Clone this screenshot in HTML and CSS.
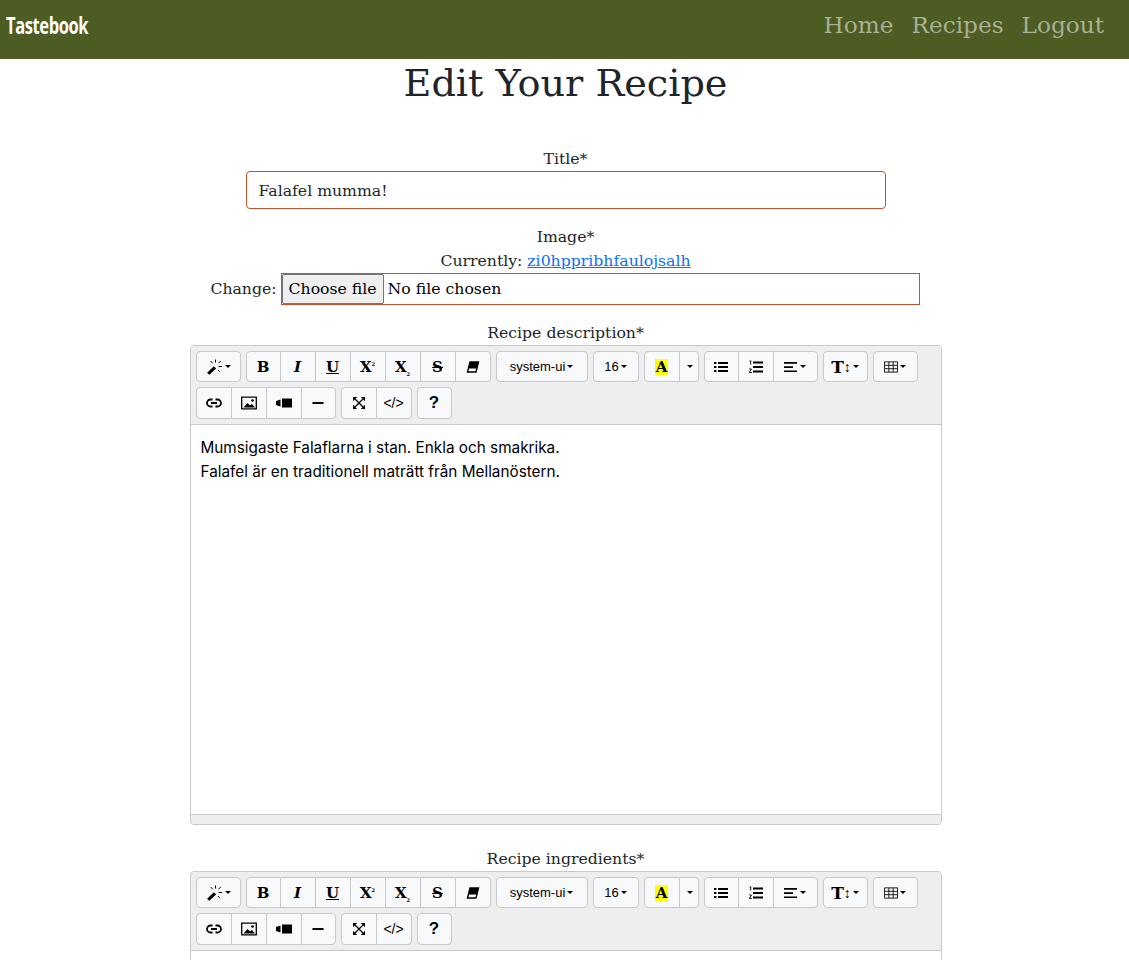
FILE: index.html
```html
<!DOCTYPE html>
<html lang="en">
<head>
  <meta charset="UTF-8" />
  <meta name="viewport" content="width=device-width, initial-scale=1.0"/>
  <title>Edit Your Recipe</title>
  <link rel="stylesheet" href="styles.css">
</head>
<body>
  <svg class="icon-defs" aria-hidden="true">
    <symbol id="i-magic" viewBox="0 0 16 16">
      <path d="M.6 13.800 7.400 7.200l2.200 2.200-6.800 6.400z" fill="#000"/>
      <path d="M9 .5v3M14.200 2l-2.200 2.200M4.200 2l2 2.200M12 7.500h3.500M11.400 11l1.800 1.800" stroke="#000" stroke-width="1" fill="none"/>
    </symbol>
    <symbol id="i-eraser" viewBox="0 0 14 14">
      <path d="M4 2h8.500l-2.500 10H1.500z" fill="none" stroke="#000" stroke-width="1.400"/>
      <path d="M4 2h8.500l-1.500 6.500H2.500z" fill="#000"/>
    </symbol>
    <symbol id="i-ul" viewBox="0 0 14 14">
      <path d="M0 2h2.400v2H0zM0 6h2.400v2H0zM0 10h2.400v2H0zM4 2h10v2H4zM4 6h10v2H4zM4 10h10v2H4z" fill="#000"/>
    </symbol>
    <symbol id="i-ol" viewBox="0 0 14 14">
      <path d="M4 1.500h10v2H4zM4 6h10v2H4zM4 10.500h10v2H4z" fill="#000"/>
      <path d="M.6 1.200 1.700.6v4M.2 9h2.300L.3 12.500h2.500" fill="none" stroke="#000" stroke-width=".9"/>
    </symbol>
    <symbol id="i-align" viewBox="0 0 14 14">
      <path d="M0 2h13v1.700H0zM0 6.200h9v1.700H0zM0 10.400h13v1.700H0z" fill="#000"/>
    </symbol>
    <symbol id="i-table" viewBox="0 0 15 14">
      <path d="M.5 1.500h14v11H.5zM.5 5.200h14M.5 8.800h14M5.200 1.500v11M9.800 1.500v11" fill="none" stroke="#111" stroke-width="1"/>
    </symbol>
    <symbol id="i-link" viewBox="0 0 16 14">
      <path d="M6.500 3.500H4.500a3.500 3.500 0 0 0 0 7h2M9.500 3.500h2a3.500 3.500 0 0 1 0 7h-2M5 7h6" fill="none" stroke="#000" stroke-width="1.800"/>
    </symbol>
    <symbol id="i-picture" viewBox="0 0 16 14">
      <path d="M.7 1.200h14.600v11.600H.7z" fill="none" stroke="#000" stroke-width="1.300"/>
      <path d="M2.500 11.500 6.500 7l2.500 2.500 2-1.500 3 3.500z" fill="#000"/>
      <circle cx="11.500" cy="4.500" r="1.300" fill="#000"/>
    </symbol>
    <symbol id="i-video" viewBox="0 0 16 14">
      <path d="M6 2.500h10v9H6zM0 5l4.500-1.500v7L0 9z" fill="#000"/>
    </symbol>
    <symbol id="i-hr" viewBox="0 0 14 14">
      <path d="M1.500 6h11v2h-11z" fill="#000"/>
    </symbol>
    <symbol id="i-full" viewBox="0 0 14 14">
      <path d="M3 3l8 8M11 3l-8 8" stroke="#000" stroke-width="1.200" fill="none"/>
      <path d="M1 1h4.200L1 5.200zM13 1H8.800L13 5.200zM1 13h4.200L1 8.800zM13 13H8.800L13 8.800z" fill="#000"/>
    </symbol>
  </svg>

  <nav class="navbar">
    <a class="brand" href="#">Tastebook</a>
    <div class="nav-links">
      <a href="#">Home</a>
      <a href="#">Recipes</a>
      <a href="#">Logout</a>
    </div>
  </nav>

  <main class="page">
    <h1>Edit Your Recipe</h1>
    <form class="recipe-form">
      <div class="field">
        <label for="title">Title*</label>
        <input class="title-input" type="text" id="title" value="Falafel mumma!">
      </div>

      <div class="field">
        <label for="image">Image*</label>
        <div>Currently: <a href="#">zi0hppribhfaulojsalh</a></div>
        <div class="file-row">Change:
          <label class="file-input">
            <input type="file" id="image">
            <span class="file-btn">Choose file</span>
            <span>No file chosen</span>
          </label>
        </div>
      </div>

      <div class="field">
        <label>Recipe description*</label>
        <div class="editor">
          <div class="toolbar">
            <div class="btn-group"><button type="button" class="btn wide"><svg class="ico magic"><use href="#i-magic"/></svg><i class="caret"></i></button></div>
            <div class="btn-group">
              <button type="button" class="btn"><b class="glyph">B</b></button>
              <button type="button" class="btn"><b class="glyph slant">I</b></button>
              <button type="button" class="btn"><b class="glyph under">U</b></button>
              <button type="button" class="btn"><b class="glyph">X<sup>2</sup></b></button>
              <button type="button" class="btn"><b class="glyph">X<sub>2</sub></b></button>
              <button type="button" class="btn"><b class="glyph strike">S</b></button>
              <button type="button" class="btn"><svg class="ico small"><use href="#i-eraser"/></svg></button>
            </div>
            <div class="btn-group"><button type="button" class="btn font-name">system-ui<i class="caret"></i></button></div>
            <div class="btn-group"><button type="button" class="btn font-size">16<i class="caret"></i></button></div>
            <div class="btn-group">
              <button type="button" class="btn lead"><b class="glyph marker">A</b></button>
              <button type="button" class="btn narrow"><i class="caret"></i></button>
            </div>
            <div class="btn-group">
              <button type="button" class="btn"><svg class="ico small"><use href="#i-ul"/></svg></button>
              <button type="button" class="btn"><svg class="ico small"><use href="#i-ol"/></svg></button>
              <button type="button" class="btn wide"><svg class="ico small"><use href="#i-align"/></svg><i class="caret"></i></button>
            </div>
            <div class="btn-group"><button type="button" class="btn wide"><b class="glyph big">T</b><span class="updown">↕</span><i class="caret"></i></button></div>
            <div class="btn-group"><button type="button" class="btn wide"><svg class="ico small"><use href="#i-table"/></svg><i class="caret"></i></button></div>
            <div class="btn-group">
              <button type="button" class="btn tall lead"><svg class="ico"><use href="#i-link"/></svg></button>
              <button type="button" class="btn tall"><svg class="ico"><use href="#i-picture"/></svg></button>
              <button type="button" class="btn tall"><svg class="ico"><use href="#i-video"/></svg></button>
              <button type="button" class="btn tall last"><svg class="ico small"><use href="#i-hr"/></svg></button>
            </div>
            <div class="btn-group">
              <button type="button" class="btn tall lead"><svg class="ico small"><use href="#i-full"/></svg></button>
              <button type="button" class="btn tall code">&lt;/&gt;</button>
            </div>
            <div class="btn-group"><button type="button" class="btn tall help">?</button></div>
          </div>
          <div class="editable">
            <p>Mumsigaste Falaflarna i stan. Enkla och smakrika.</p>
            <p>Falafel är en traditionell maträtt från Mellanöstern.</p>
          </div>
          <div class="statusbar"></div>
        </div>
      </div>

      <div class="field">
        <label>Recipe ingredients*</label>
        <div class="editor">
          <div class="toolbar">
            <div class="btn-group"><button type="button" class="btn wide"><svg class="ico magic"><use href="#i-magic"/></svg><i class="caret"></i></button></div>
            <div class="btn-group">
              <button type="button" class="btn"><b class="glyph">B</b></button>
              <button type="button" class="btn"><b class="glyph slant">I</b></button>
              <button type="button" class="btn"><b class="glyph under">U</b></button>
              <button type="button" class="btn"><b class="glyph">X<sup>2</sup></b></button>
              <button type="button" class="btn"><b class="glyph">X<sub>2</sub></b></button>
              <button type="button" class="btn"><b class="glyph strike">S</b></button>
              <button type="button" class="btn"><svg class="ico small"><use href="#i-eraser"/></svg></button>
            </div>
            <div class="btn-group"><button type="button" class="btn font-name">system-ui<i class="caret"></i></button></div>
            <div class="btn-group"><button type="button" class="btn font-size">16<i class="caret"></i></button></div>
            <div class="btn-group">
              <button type="button" class="btn lead"><b class="glyph marker">A</b></button>
              <button type="button" class="btn narrow"><i class="caret"></i></button>
            </div>
            <div class="btn-group">
              <button type="button" class="btn"><svg class="ico small"><use href="#i-ul"/></svg></button>
              <button type="button" class="btn"><svg class="ico small"><use href="#i-ol"/></svg></button>
              <button type="button" class="btn wide"><svg class="ico small"><use href="#i-align"/></svg><i class="caret"></i></button>
            </div>
            <div class="btn-group"><button type="button" class="btn wide"><b class="glyph big">T</b><span class="updown">↕</span><i class="caret"></i></button></div>
            <div class="btn-group"><button type="button" class="btn wide"><svg class="ico small"><use href="#i-table"/></svg><i class="caret"></i></button></div>
            <div class="btn-group">
              <button type="button" class="btn tall lead"><svg class="ico"><use href="#i-link"/></svg></button>
              <button type="button" class="btn tall"><svg class="ico"><use href="#i-picture"/></svg></button>
              <button type="button" class="btn tall"><svg class="ico"><use href="#i-video"/></svg></button>
              <button type="button" class="btn tall last"><svg class="ico small"><use href="#i-hr"/></svg></button>
            </div>
            <div class="btn-group">
              <button type="button" class="btn tall lead"><svg class="ico small"><use href="#i-full"/></svg></button>
              <button type="button" class="btn tall code">&lt;/&gt;</button>
            </div>
            <div class="btn-group"><button type="button" class="btn tall help">?</button></div>
          </div>
          <div class="editable"></div>
          <div class="statusbar"></div>
        </div>
      </div>
    </form>
  </main>
</body>
</html>
```

FILE: styles.css
```css
html, body {
  height: 100%;
  overflow: hidden;
}
body {
  margin: 0;
  font-family: "DejaVu Serif", serif;
  font-size: 15.7px;
  line-height: 24px;
  color: #212529;
  background: #fff;
}
a {
  color: #0d6efd;
}
.icon-defs {
  display: none;
}

/* navbar */
.navbar {
  height: 59px;
  box-sizing: border-box;
  padding: 0 25px 10px 6px;
  display: flex;
  justify-content: space-between;
  align-items: center;
  background: #4d5c22;
}
.brand {
  color: #fff;
  font-family: "Open Sans", sans-serif;
  font-weight: 700;
  font-size: 23px;
  line-height: 30px;
  letter-spacing: -0.6px;
  text-decoration: none;
  transform: scaleX(0.72);
  transform-origin: left center;
}
.nav-links {
  display: flex;
  gap: 18px;
}
.nav-links a {
  color: #a9b094;
  font-size: 23.2px;
  line-height: 48px;
  text-decoration: none;
}

/* form */
.page {
  padding-left: 2px;
  text-align: center;
}
h1 {
  margin: 0 0 40px;
  font-size: 38.2px;
  font-weight: 400;
  line-height: 48px;
}
.field {
  margin-bottom: 16px;
}
.field > label {
  display: block;
}
.title-input {
  display: block;
  box-sizing: border-box;
  width: 640px;
  height: 38px;
  margin: 0 auto;
  padding: 6px 12px;
  border: 1px solid #c8502d;
  border-radius: 4px;
  font: inherit;
  color: #212529;
}
.file-row {
  height: 32px;
  padding-right: 1px;
  display: flex;
  justify-content: center;
  align-items: center;
  gap: 4px;
}
.file-input {
  box-sizing: border-box;
  width: 639px;
  height: 32px;
  display: flex;
  align-items: center;
  gap: 4px;
  border: 1px solid #c8502d;
  color: #000;
  text-align: left;
}
.file-input input {
  display: none;
}
.file-btn {
  box-sizing: border-box;
  width: 102px;
  height: 30px;
  line-height: 28px;
  text-align: center;
  background: #efefef;
  border: 1px solid #767676;
  border-radius: 2px;
}

/* editor */
.editor {
  box-sizing: border-box;
  width: 752px;
  margin: 0 auto 22px;
  border: 1px solid #c9c9c9;
  border-radius: 4px;
  text-align: left;
}
.toolbar {
  display: flex;
  flex-wrap: wrap;
  padding: 0 0 5px 5px;
  background: #eee;
  border-bottom: 1px solid #c9c9c9;
  border-radius: 4px 4px 0 0;
}
.btn-group {
  display: flex;
  margin: 5px 5px 0 0;
}
.btn {
  box-sizing: border-box;
  width: 36px;
  height: 31px;
  margin-left: -1px;
  padding: 0;
  display: flex;
  justify-content: center;
  align-items: center;
  background: #f8f9fa;
  border: 1px solid #c9c9c9;
  color: #000;
  font-family: "Liberation Sans", sans-serif;
  font-size: 13px;
}
.btn:first-child {
  width: 35px;
  margin-left: 0;
  border-radius: 4px 0 0 4px;
}
.btn:last-child {
  border-radius: 0 4px 4px 0;
}
.btn:only-child {
  border-radius: 4px;
}
.btn.tall {
  height: 32px;
}
.btn.lead {
  width: 36px;
}
.btn.last {
  width: 35px;
}
.btn.wide {
  width: 45px;
}
.btn.narrow {
  width: 20px;
}
.btn.font-name {
  width: 92px;
}
.btn.font-size {
  width: 46px;
}
.btn.code {
  font-size: 14px;
}
.btn.help {
  width: 35px;
  font-size: 17px;
  font-weight: 700;
}
.ico {
  width: 16px;
  height: 14px;
}
.ico.small {
  width: 14px;
}
.ico.magic {
  width: 17px;
  height: 16px;
}
.caret {
  width: 0;
  height: 0;
  margin-left: 2px;
  border-top: 3px solid #000;
  border-left: 3px solid transparent;
  border-right: 3px solid transparent;
}
.glyph {
  font-family: "DejaVu Serif", serif;
  font-size: 15px;
  line-height: 16px;
}
.glyph.big {
  font-size: 17px;
}
.glyph sup, .glyph sub {
  font-size: 5px;
  line-height: 0;
}
.slant {
  font-style: italic;
}
.under {
  text-decoration: underline;
}
.strike {
  text-decoration: line-through;
}
.marker {
  width: 13px;
  text-align: center;
  background: #ff0;
}
.updown {
  font-size: 14px;
  line-height: 14px;
}
.editable {
  height: 389px;
  padding: 11px 10px 10px;
  box-sizing: border-box;
  background: #fff;
  color: #000;
  font-family: "Inter", "Liberation Sans", sans-serif;
  font-size: 15.3px;
}
.editable p {
  margin: 0;
}
.statusbar {
  height: 9px;
  background: #eee;
  border-top: 1px solid #c9c9c9;
  border-radius: 0 0 4px 4px;
}
```
